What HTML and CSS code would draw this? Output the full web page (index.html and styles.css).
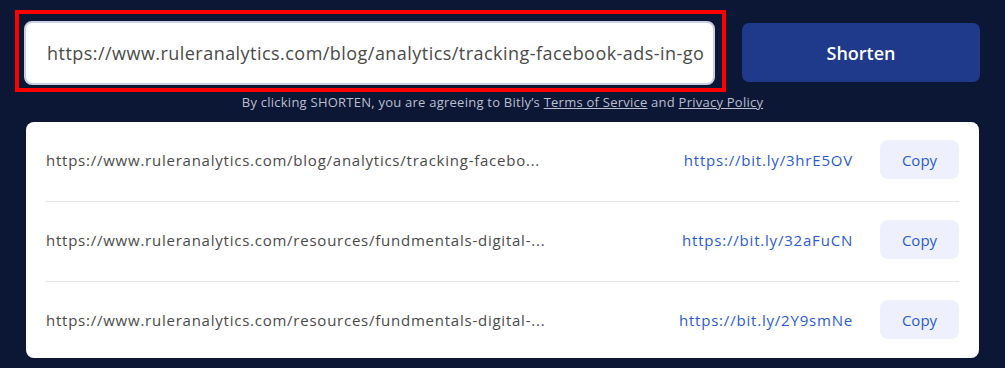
FILE: index.html
```html
<!DOCTYPE html>
<html lang="en">
<head>
<meta charset="utf-8">
<title>Bitly shortener</title>
<link rel="stylesheet" href="styles.css">
</head>
<body>
<div class="page">
  <div class="form-row">
    <div class="highlight">
      <div class="input">https://www.ruleranalytics.com/blog/analytics/tracking-facebook-ads-in-go</div>
    </div>
    <button class="shorten">Shorten</button>
  </div>
  <p class="terms">By clicking SHORTEN, you are agreeing to Bitly’s <a href="#">Terms of Service</a> and <a href="#">Privacy Policy</a></p>
  <div class="card">
    <div class="row">
      <span class="long">https://www.ruleranalytics.com/blog/analytics/tracking-facebo...</span>
      <a class="short" href="#">https://bit.ly/3hrE5OV</a>
      <button class="copy">Copy</button>
    </div>
    <div class="row">
      <span class="long">https://www.ruleranalytics.com/resources/fundmentals-digital-...</span>
      <a class="short" href="#">https://bit.ly/32aFuCN</a>
      <button class="copy">Copy</button>
    </div>
    <div class="row last">
      <span class="long">https://www.ruleranalytics.com/resources/fundmentals-digital-...</span>
      <a class="short" href="#">https://bit.ly/2Y9smNe</a>
      <button class="copy">Copy</button>
    </div>
  </div>
</div>
</body>
</html>
```
FILE: styles.css
```css
html, body {
  margin: 0;
  padding: 0;
  background: #0c1736;
  font-family: "Open Sans", "Liberation Sans", sans-serif;
}
.page {
  width: 1005px;
  height: 368px;
  overflow: hidden;
}
.form-row {
  display: flex;
  align-items: flex-start;
  padding: 10px 0 0 15px;
  gap: 16px;
}
.highlight {
  width: 711px;
  height: 82px;
  box-sizing: border-box;
  border: 4px solid #ff0000;
  padding: 7px 7px 0 5px;
}
.input {
  height: 64px;
  box-sizing: border-box;
  background: #ffffff;
  border: 2px solid #c8cfe6;
  border-radius: 8px;
  padding-left: 21px;
  display: flex;
  align-items: center;
  font-size: 18px;
  letter-spacing: 0.46px;
  color: #4a4a4a;
  white-space: nowrap;
  overflow: hidden;
}
.shorten {
  margin-top: 13px;
  width: 238px;
  height: 59px;
  background: #1f3a8b;
  border: none;
  border-radius: 7px;
  color: #ffffff;
  font-family: inherit;
  font-size: 18px;
  font-weight: 600;
}
.terms {
  margin: 1px 0 0;
  text-align: center;
  font-size: 13px;
  line-height: 18px;
  letter-spacing: 0.24px;
  color: #b9bfce;
}
.terms a {
  color: #b9bfce;
}
.card {
  margin: 11px 26px 0;
  background: #ffffff;
  border-radius: 8px;
  padding: 0 20px;
}
.row {
  display: flex;
  align-items: center;
  padding: 18px 0 22px;
  border-bottom: 1px solid #e6e6e6;
}
.row.last {
  border-bottom: none;
  padding-bottom: 19px;
}
.long {
  flex: 1;
  font-size: 15px;
  letter-spacing: 0.76px;
  color: #4a4a4a;
  white-space: nowrap;
}
.short {
  font-size: 15px;
  letter-spacing: 0.8px;
  color: #2a5bd7;
  text-decoration: none;
}
.copy {
  margin-left: 27px;
  width: 79px;
  height: 39px;
  background: #eef1fd;
  border: none;
  border-radius: 8px;
  color: #2a5bd7;
  font-family: inherit;
  font-size: 15px;
}
```
